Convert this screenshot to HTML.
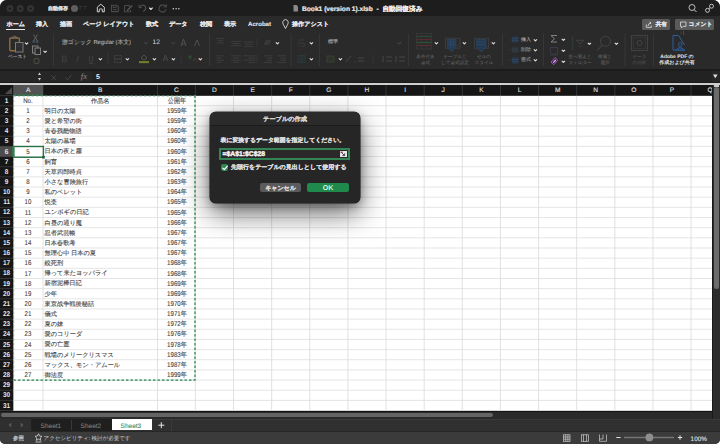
<!DOCTYPE html>
<html><head><meta charset="utf-8">
<style>
html,body{margin:0;padding:0;width:720px;height:444px;overflow:hidden;background:#ffffff;}
body{font-family:"Liberation Sans",sans-serif;position:relative;text-rendering:geometricPrecision;}
.abs{position:absolute;}
#win{position:absolute;left:0;top:0;width:720px;height:444px;border-radius:7px 7px 5px 5px;overflow:hidden;background:#2a2a2a;}
#title{position:absolute;left:0;top:0;width:720px;height:16px;background:#1d1d1d;}
#tabs{position:absolute;left:0;top:16px;width:720px;height:16px;background:#2a2a2a;}
#ribbon{position:absolute;left:0;top:32px;width:720px;height:36px;background:#2a2a2a;}
#fbar{position:absolute;left:0;top:68.6px;width:720px;height:14.4px;background:#262626;border-top:2px solid #1b1b1b;border-bottom:0.8px solid #1b1b1b;box-sizing:border-box;}
.t{position:absolute;white-space:nowrap;line-height:1;}
.tab{position:absolute;top:20px;font-size:6.1px;color:#e6e6e6;font-weight:bold;-webkit-text-stroke:0.1px #e6e6e6;white-space:nowrap;line-height:1;}
.ch{position:absolute;top:85.6px;height:10px;line-height:10px;text-align:center;font-size:6.6px;color:#e2e2e2;-webkit-text-stroke:0.1px #e2e2e2;}
.rh{position:absolute;left:0;width:13.2px;text-align:center;font-size:7px;color:#e6e6e6;font-weight:bold;line-height:10.16px;transform:scaleX(0.92);}
.cell{position:absolute;height:10.16px;line-height:10.16px;font-size:6.2px;color:#444;white-space:nowrap;-webkit-text-stroke:0.12px #4a4a4a;}
.ca{left:13.2px;width:29.8px;text-align:center;font-size:7px;transform:scaleX(0.87);}
.cb{left:44.6px;}
.cb0{left:43px;width:114.5px;text-align:center;}
.cc{left:157.5px;width:37.9px;text-align:center;font-size:7px;transform:scaleX(0.87);}
</style></head><body>
<div id="win">
  <div id="title">
    <svg class="abs" style="left:0;top:0" width="40" height="16" viewBox="0 0 40 16"><g fill="#343434"><circle cx="9.9" cy="8.6" r="3.5"/><circle cx="20.2" cy="8.6" r="3.5"/><circle cx="30.5" cy="8.6" r="3.5"/></g><g fill="#1c1c1c"><circle cx="9.9" cy="8.6" r="1.2"/><circle cx="20.2" cy="8.6" r="1.2"/><circle cx="30.5" cy="8.6" r="1.2"/></g></svg>
    <div class="t" style="left:48px;top:6.6px;font-size:5px;color:#e0e0e0;font-weight:bold;-webkit-text-stroke:0.15px #e0e0e0">自動保存</div>
    <div class="abs" style="left:70.6px;top:4.8px;width:7.4px;height:7.4px;border-radius:50%;background:#5e5e5e;"></div>
    <svg class="abs" style="left:0;top:0" width="720" height="16" viewBox="0 0 720 16">
      <g fill="none">
        <path d="M97.3 11.8 L97.3 7.2 L100.8 4.2 L104.3 7.2 L104.3 11.8 L102.3 11.8 L102.3 9.3 Q100.8 8.2 99.3 9.3 L99.3 11.8 Z" stroke="#e6e6e6" stroke-width="0.9" stroke-linejoin="round"/>
        <path d="M111.5 5.2 L116.8 5.2 L118.3 6.7 L118.3 11.6 L111.5 11.6 Z" stroke="#4a4a4a" stroke-width="1.1" stroke-linejoin="round"/>
        <path d="M113.2 5.5 L113.2 7.5 L116 7.5 L116 5.5 M113 9.6 L116.8 9.6" stroke="#4a4a4a" stroke-width="0.9"/>
        <path d="M124.5 5.5 L129.5 5.5 L129.5 7 M124.5 5.5 L124.5 11.8 L130.5 11.8 L130.5 10" stroke="#4a4a4a" stroke-width="1.1"/>
        <path d="M126.5 10.2 L131.8 5 L132.8 6 L127.6 11.2 Z" fill="#555" stroke="none"/>
        <path d="M139.5 6.8 Q142.5 3.8 145 6.2 Q147 9 143.2 11.6" stroke="#4a4a4a" stroke-width="1.3"/>
        <path d="M138.6 4.8 L139.3 7.6 L142 7.2" stroke="#4a4a4a" stroke-width="1.1"/>
        <path d="M165.8 6.3 Q163.5 3.8 160.5 5.5 Q158.3 7.5 159 10 Q160.5 12.5 163.5 12 Q165.5 11.3 166 9.3" stroke="#4a4a4a" stroke-width="1.3"/>
        <path d="M166.5 4.2 L166.2 7 L163.5 6.8" stroke="#4a4a4a" stroke-width="1.1"/>
        <circle cx="173.3" cy="8.7" r="0.75" fill="#d8d8d8"/>
        <circle cx="176.1" cy="8.7" r="0.75" fill="#d8d8d8"/>
        <circle cx="178.9" cy="8.7" r="0.75" fill="#d8d8d8"/>
        <path d="M293.5 5 L296.5 5 L298 6.5 L298 11.5 L293.5 11.5 Z" fill="#8a8a8a"/>
        <circle cx="692" cy="7.5" r="3" stroke="#cfcfcf" stroke-width="0.9"/>
        <line x1="694.2" y1="9.7" x2="696.5" y2="12" stroke="#cfcfcf" stroke-width="1"/>
        <circle cx="707.5" cy="10.3" r="2" stroke="#cfcfcf" stroke-width="0.9"/>
        <circle cx="711.5" cy="6.2" r="2" stroke="#cfcfcf" stroke-width="0.9"/>
        <line x1="708.8" y1="8.8" x2="710.2" y2="7.6" stroke="#cfcfcf" stroke-width="0.9"/>
      </g>
    </svg>
    <div class="t" style="left:78px;top:6px;font-size:4.5px;color:#4a4a4a">オフ</div>
    <div class="t" style="left:302px;top:6.5px;font-size:6.65px;color:#ececec;font-weight:bold;-webkit-text-stroke:0.2px #ececec">Book1 (version 1).xlsb &nbsp;- &nbsp;自動回復済み</div>
  </div>
  <div id="tabs">
    <div class="tab" style="left:6.5px;top:6px">ホーム</div>
    <div class="abs" style="left:6px;top:13px;width:19px;height:1.3px;background:#e8e8e8"></div>
    <div class="tab" style="left:36px;top:6px">挿入</div>
    <div class="tab" style="left:60px;top:6px">描画</div>
    <div class="tab" style="left:83px;top:6px">ページ レイアウト</div>
    <div class="tab" style="left:146px;top:6px">数式</div>
    <div class="tab" style="left:169px;top:6px">データ</div>
    <div class="tab" style="left:200px;top:6px">校閲</div>
    <div class="tab" style="left:224px;top:6px">表示</div>
    <div class="tab" style="left:248px;top:6px">Acrobat</div>
    <div class="tab" style="left:292px;top:6px">操作アシスト</div>
    <svg class="abs" style="left:280px;top:0" width="12" height="16" viewBox="0 0 12 16"><path d="M5.5 12.5 L3.2 8.2 Q2.5 6.8 3 5.5 Q4 3.5 5.5 3.5 Q7 3.5 8 5.5 Q8.5 6.8 7.8 8.2 Z" fill="none" stroke="#dcdcdc" stroke-width="0.9"/></svg>
    <div class="abs" style="left:642px;top:3.2px;width:28.4px;height:11.2px;border-radius:1.5px;background:#5a5a5a"></div>
    <div class="abs" style="left:675px;top:3.2px;width:39px;height:11.2px;border-radius:1.5px;background:#5a5a5a"></div>
    <svg class="abs" style="left:640px;top:0" width="80" height="16" viewBox="0 0 80 16"><g fill="none" stroke="#e0e0e0" stroke-width="0.8"><path d="M6.3 8.5 L6.3 11.4 L11.3 11.4 L11.3 9.5 M8 10 Q8.3 7.2 10.8 6.8 M9.6 5.8 L11 6.8 L10 8.2"/><path d="M40.5 6 L46 6 L46 10.4 L43 10.4 L41.5 11.9 L41.5 10.4 L40.5 10.4 Z"/></g></svg>
    <div class="tab" style="left:655.5px;top:6.8px;font-size:5.8px">共有</div>
    <div class="tab" style="left:688.6px;top:6.8px;font-size:5.8px">コメント</div>
  </div>
  <div id="ribbon"></div>
  <div id="fbar"></div>
  <div class="abs" style="left:92px;top:70.6px;width:620px;height:11.6px;background:#222222"></div>
  <svg class="abs" style="left:0;top:0" width="720" height="90" viewBox="0 0 720 90">
    <g fill="none" stroke-width="0.9">
      <!-- separators -->
      <g stroke="#3a3a3a" stroke-width="0.8">
        <line x1="53.5" y1="33.5" x2="53.5" y2="66"/>
        <line x1="209.5" y1="33.5" x2="209.5" y2="66"/>
        <line x1="291" y1="33.5" x2="291" y2="66"/>
        <line x1="319.5" y1="33.5" x2="319.5" y2="66"/>
        <line x1="408.5" y1="33.5" x2="408.5" y2="66"/>
        <line x1="502.5" y1="33.5" x2="502.5" y2="66"/>
        <line x1="543.5" y1="33.5" x2="543.5" y2="66"/>
        <line x1="625" y1="33.5" x2="625" y2="66"/>
        <line x1="653.5" y1="33.5" x2="653.5" y2="66"/>
        <line x1="108" y1="52.5" x2="108" y2="64"/>
        <line x1="181" y1="55" x2="181" y2="63"/>
        <line x1="257" y1="39" x2="257" y2="47"/>
        <line x1="257" y1="55" x2="257" y2="63"/>
        <line x1="373" y1="55" x2="373" y2="63"/>
      </g>
      <!-- paste -->
      <rect x="9.8" y="38" width="9.6" height="12.8" rx="1" stroke="#8e6e40" stroke-width="1.4"/>
      <path d="M12.5 38.5 L12.5 37 Q14.6 35.2 16.7 37 L16.7 38.5" stroke="#6e6a60" stroke-width="1"/>
      <rect x="15.5" y="42.5" width="7.5" height="9.5" fill="#2e2e2e" stroke="#7a7a7a" stroke-width="1"/><path d="M17 44.5 L21.5 44.5 M17 46.5 L21.5 46.5" stroke="#3a3a3a" stroke-width="0.6"/>
      <!-- scissors -->
      <path d="M33.5 34.5 L37.5 41 M37.5 34.5 L33.5 41" stroke="#6e6e6e" stroke-width="0.8"/>
      <circle cx="33.8" cy="41.6" r="0.9" stroke="#5a6a7a" stroke-width="0.7"/>
      <circle cx="37.2" cy="41.6" r="0.9" stroke="#5a6a7a" stroke-width="0.7"/>
      <!-- copy -->
      <rect x="32.5" y="46" width="5.5" height="7" stroke="#8a8a8a"/>
      <rect x="35" y="48" width="5.5" height="6.5" fill="#2a2a2a" stroke="#8a8a8a"/>
      <!-- format painter -->
      <circle cx="36.5" cy="61" r="2.6" stroke="#48483e" stroke-width="1.1"/>
      <!-- chevrons (white-ish) -->
      <g stroke="#dedede" stroke-width="1.15" stroke-linejoin="round">
        <path d="M25 42.6 L26.6 44.2 L28.2 42.6"/>
        <path d="M43.5 50.8 L45.1 52.4 L46.7 50.8"/>
        <path d="M98.8 58.3 L100.4 59.9 L102 58.3"/>
        <path d="M125.8 58.3 L127.4 59.9 L129 58.3"/>
        <path d="M152.8 58.3 L154.4 59.9 L156 58.3"/>
        <path d="M171.8 58.3 L173.4 59.9 L175 58.3"/>
        <path d="M198.8 58.3 L200.4 59.9 L202 58.3"/>
        <path d="M275.8 42.3 L277.4 43.9 L279 42.3"/>
        <path d="M309.8 42.3 L311.4 43.9 L313 42.3"/>
        <path d="M309.8 58.3 L311.4 59.9 L313 58.3"/>
        <path d="M338.8 58.3 L340.4 59.9 L342 58.3"/>
        <path d="M434.8 42.3 L436.4 43.9 L438 42.3"/>
        <path d="M462.8 42.3 L464.4 43.9 L466 42.3"/>
        <path d="M491.8 42.3 L493.4 43.9 L495 42.3"/>
        <path d="M533.8 39.3 L535.4 40.9 L537 39.3"/>
        <path d="M533.8 49.3 L535.4 50.9 L537 49.3"/>
        <path d="M533.8 59.3 L535.4 60.9 L537 59.3"/>
        <path d="M561.8 38.8 L563.4 40.4 L565 38.8"/>
        <path d="M561.8 49.8 L563.4 51.4 L565 49.8"/>
        <path d="M561.8 60.8 L563.4 62.4 L565 60.8"/>
        <path d="M587.8 42.8 L589.4 44.4 L591 42.8"/>
        <path d="M614.8 42.8 L616.4 44.4 L618 42.8"/>
        <path d="M149.2 7.6 L150.9 9.5 L152.6 7.6"/>
      </g>
      <!-- dim chevrons -->
      <g stroke="#5a5a5a" stroke-width="0.8">
        <path d="M144.3 42.3 L145.9 43.9 L147.5 42.3"/>
        <path d="M171.8 42.3 L173.4 43.9 L175 42.3"/>
        <path d="M397.8 42.3 L399.4 43.9 L401 42.3"/>
      </g>
      <!-- font grow/shrink -->
      <path d="M181 46 L183.5 39 L186 46 M182 44 L185 44" stroke="#555"/>
      <path d="M194.5 46 L197 40 L199.5 46" stroke="#555"/>
      <!-- B I U -->
      <path d="M62.5 56 L62.5 62 L65 62 Q66.5 62 66.5 60.5 Q66.5 59 65 59 L62.5 59 M62.5 56 L64.8 56 Q66 56 66 57.5 Q66 59 64.8 59" stroke="#3e3e3e" stroke-width="1.2"/>
      <path d="M78.5 56 L76.8 62" stroke="#3e3e3e" stroke-width="1.1"/>
      <path d="M89.5 56 L89.5 60.5 Q89.5 62 91 62 Q92.5 62 92.5 60.5 L92.5 56 M89 63.5 L93 63.5" stroke="#3e3e3e" stroke-width="1.1"/>
      <!-- borders -->
      <rect x="114.5" y="55.5" width="7" height="7" stroke="#4a4a4a" stroke-dasharray="1 0.8"/>
      <line x1="114.5" y1="59" x2="121.5" y2="59" stroke="#4a4a4a"/>
      <!-- fill color -->
      <path d="M141 58 L144 55 L147 58 L144 60 Z" stroke="#555"/>
      <rect x="139" y="61" width="10" height="2.2" fill="#6e7a2a" stroke="none"/>
      <!-- font color -->
      <path d="M163 61 L165.5 55 L168 61 M164 59 L167 59" stroke="#4a4a4a"/>
      <!-- misc japanese icon -->
      <path d="M188 57 L192 57 M190 55 L190 59 M193 61 L196 58" stroke="#2e5a3a"/>
      <path d="M196 62 L199 59" stroke="#6a2a2a"/>
      <!-- alignment -->
      <g stroke="#4a4a4a" stroke-width="0.6">
        <path d="M216.5 38.5 L224 38.5 M217.5 40.7 L223 40.7 M216.5 42.9 L224 42.9"/>
        <path d="M231 41.3 L241 41.3 M232.5 43.5 L239.5 43.5 M231 45.7 L241 45.7"/>
        <path d="M243.5 42 L253.5 42 M245 44.2 L252 44.2 M243.5 46.4 L253.5 46.4"/>
        <path d="M216.5 55.8 L224 55.8 M216.5 58 L221.5 58 M216.5 60.2 L224 60.2 M216.5 62.4 L221.5 62.4"/>
        <path d="M231 55.8 L241 55.8 M233 58 L239 58 M231 60.2 L241 60.2 M233 62.4 L239 62.4"/>
        <path d="M243.5 55.8 L255.5 55.8 M248.5 58 L255.5 58 M243.5 60.2 L255.5 60.2 M248.5 62.4 L255.5 62.4"/>
        <path d="M264 55.8 L272 55.8 M267 58 L272 58 M267 60.2 L272 60.2 M264 62.4 L272 62.4"/>
        <path d="M277.5 55.8 L286 55.8 M280.5 58 L286 58 M280.5 60.2 L286 60.2 M277.5 62.4 L286 62.4"/>
      </g>
      <path d="M264.5 44.5 L270.5 40.5" stroke="#3e3e3e" stroke-width="1.6"/>
      <circle cx="267.3" cy="42.4" r="2.6" fill="#383838"/>
      <!-- wrap / merge -->
      <path d="M298 40 L304 40 M298 43 L303 43 Q305 43 305 44.5 Q305 46 303 46 L301 46 M298 46 L299 46" stroke="#3c3c3c" stroke-width="0.9"/>
      <rect x="298" y="55.5" width="7" height="7" stroke="#2a3a3c" stroke-width="0.9" fill="#26302f"/>
      <line x1="301.5" y1="55.5" x2="301.5" y2="62.5" stroke="#2a3a3c"/>
      <!-- number -->
      <rect x="327" y="56" width="7" height="6" stroke="#3a4630" fill="#2e322a"/>
      <path d="M346 62 L351 56 M346.5 57 L346.5 57.2 M350.5 61 L350.5 61.2" stroke="#4a4a4a"/>
      <path d="M355 61 L355 62.5 M358 58 L364 58 M358 61 L364 61" stroke="#4a4a4a"/>
      <path d="M383 56 L383 62 M386 57 L392 57 M386 61 L392 61" stroke="#4a4a4a"/>
      <path d="M396 56 L396 62 M399 57 L405 57 M399 61 L405 61" stroke="#4a4a4a"/>
      <!-- styles: conditional formatting -->
      <g stroke-width="1.1">
        <rect x="416.5" y="33.5" width="15" height="15.5" stroke="#3a3a3a" fill="#2a2a2a" stroke-width="0.8"/>
        <line x1="417" y1="36.5" x2="431" y2="36.5" stroke="#2a4a3a"/>
        <line x1="417" y1="39.5" x2="431" y2="39.5" stroke="#5e2a34"/>
        <line x1="417" y1="42.5" x2="431" y2="42.5" stroke="#2a5a3a"/>
        <line x1="417" y1="45.5" x2="431" y2="45.5" stroke="#5e2a34"/>
        <path d="M421.5 34 L421.5 48.5 M426.5 34 L426.5 48.5" stroke="#3a3a3a" stroke-width="0.5"/>
      </g>
      <!-- table format -->
      <rect x="445.5" y="38.3" width="14.5" height="10" stroke="#3e3e3e" stroke-width="0.9"/>
      <path d="M447.5 39.5 L456 39.5 L456 47 L451.8 52 L447.5 47 Z" fill="#243a52" stroke="#2e4a66" stroke-width="0.6"/>
      <path d="M448 42 L455.5 42 M448 44.5 L455.5 44.5 M450.5 40 L450.5 48 M453 40 L453 48" stroke="#34506c" stroke-width="0.5"/>
      <line x1="456.5" y1="48" x2="460" y2="42" stroke="#4a3a2a" stroke-width="0.8"/>
      <!-- cell style -->
      <rect x="474.5" y="38.3" width="14" height="10" stroke="#3e3e3e" stroke-width="0.9"/>
      <path d="M476.5 39.5 L486 39.5 L486 47 L481.2 52 L476.5 47 Z" fill="#243a52" stroke="#2e4a66" stroke-width="0.6"/>
      <path d="M477 42 L485.5 42 M477 44.5 L485.5 44.5" stroke="#34506c" stroke-width="0.5"/>
      <line x1="486" y1="49" x2="491.5" y2="41" stroke="#3a3a3a" stroke-width="0.8"/>
      <!-- cells insert/delete/format -->
      <rect x="512" y="36.5" width="6.5" height="6" fill="#243a50"/>
      <rect x="512" y="47" width="6.5" height="6" fill="#2e3236"/>
      <rect x="512" y="57.5" width="6.5" height="6" fill="#243a50"/>
      <g stroke="#3a4a5a" stroke-width="0.6">
        <path d="M512 38.5 L518.5 38.5 M512 40.5 L518.5 40.5 M512 49 L518.5 49 M512 51 L518.5 51 M512 59.5 L518.5 59.5 M512 61.5 L518.5 61.5"/>
      </g>
      <path d="M509.5 40 L511 40 M509.5 50 L511 50 M509.5 60 L511 60" stroke="#444" stroke-width="0.8"/>
      <!-- sum -->
      <path d="M557 35.5 L551 35.5 L554.5 38.8 L551 42 L557 42" stroke="#8a8a8a" stroke-width="0.9"/>
      <rect x="550.5" y="47.5" width="7" height="6.5" stroke="#40384e" stroke-width="0.9"/><line x1="550.5" y1="55" x2="557.5" y2="55" stroke="#2e4a36" stroke-width="0.8"/>
      <path d="M551 62 L555 57.5 L557.8 60.2 L553.8 64.7 Z" stroke="#a04cc0" fill="#3a2440" stroke-width="1"/><path d="M552.8 62.2 L555.3 59.5 L556.2 60.4 L553.7 63.1 Z" fill="#d8c8e0"/>
      <!-- funnel -->
      <path d="M576.5 40.3 L584 40.3 L580.2 44 Z" stroke="#444" stroke-width="0.9"/>
      <path d="M578 46.5 L582.5 46.5" stroke="#3a3a3a" stroke-width="0.8"/>
      <path d="M572.5 36.5 L572.5 50" stroke="#2e3a33" stroke-width="1.6"/>
      <!-- magnifier -->
      <circle cx="605.5" cy="41.3" r="5" stroke="#444" stroke-width="1"/>
      <line x1="602" y1="45" x2="597.5" y2="50.5" stroke="#444" stroke-width="1.1"/>
      <!-- analyze data -->
      <rect x="631.5" y="35.5" width="16" height="15" stroke="#444" stroke-width="0.9"/>
      <rect x="633.5" y="37.5" width="12" height="11" stroke="#3a3a3a" stroke-width="0.7"/>
      <circle cx="639.5" cy="43" r="2.5" stroke="#4a4a4a" stroke-width="0.8"/>
      <!-- adobe pdf -->
      <path d="M673 35.5 L678.5 35.5 L684.5 45 M673 35.5 L673 50 L676 50" stroke="#2f5f9c" stroke-width="1"/>
      <circle cx="680.2" cy="44.3" r="1.8" stroke="#2f5f9c" stroke-width="0.9"/>
      <path d="M675.5 50.3 L680.2 46.8 L685 50.3 Z" stroke="#2f5f9c" fill="#22406a" stroke-width="0.9"/>
      <line x1="683.5" y1="31" x2="683.8" y2="35" stroke="#7a4a2a" stroke-width="0.8"/>
      <line x1="681" y1="31.5" x2="681.2" y2="34.5" stroke="#2a5a3a" stroke-width="0.7"/>
    </g>
    <!-- formula bar icons -->
    <g fill="none">
      <path d="M38 75 L39.5 72.5 L41 75 Z" fill="#d0d0d0"/>
      <path d="M38 78 L39.5 80.5 L41 78 Z" fill="#d0d0d0"/>
      <path d="M51.5 75.5 L56 80 M56 75.5 L51.5 80" stroke="#4e4e4e" stroke-width="0.8"/>
      <path d="M65.5 77.5 L67.5 79.8 L71.5 75.2" stroke="#4e4e4e" stroke-width="0.8"/>
      <path d="M713 74.6 L717.6 74.6 L715.3 78.2 Z" fill="#e0e0e0"/>
    </g>
  </svg>
  <div class="t" style="left:8px;top:55px;font-size:4.7px;color:#a8a8bc;-webkit-text-stroke:0.1px #a8a8bc">ペースト</div>
  <div class="t" style="left:62px;top:41px;font-size:5.85px;color:#b0b0b0;-webkit-text-stroke:0.1px #b0b0b0">游ゴシック Regular (本文)</div>
  <div class="t" style="left:152.5px;top:39.5px;font-size:6.6px;color:#dcdcdc">12</div>
  <div class="t" style="left:328px;top:40.3px;font-size:5px;color:#9a9a9a;font-weight:bold">標準</div>
  <div class="t" style="left:416px;top:54px;font-size:4.6px;color:#6a6a6a;line-height:6px;text-align:center;width:19px">条件付き<br>書式</div>
  <div class="t" style="left:440px;top:54px;font-size:4.6px;color:#6a6a6a;line-height:6px;text-align:center;width:30px">テーブルと<br>して書式設定</div>
  <div class="t" style="left:474px;top:54px;font-size:4.6px;color:#6a6a6a;line-height:6px;text-align:center;width:20px">セルの<br>スタイル</div>
  <div class="t" style="left:521px;top:37.5px;font-size:5px;color:#9a9a9a;font-weight:bold">挿入</div>
  <div class="t" style="left:521px;top:47.5px;font-size:5px;color:#7a7a7a;font-weight:bold">削除</div>
  <div class="t" style="left:521px;top:57.5px;font-size:5px;color:#7a7a7a;font-weight:bold">書式</div>
  <div class="t" style="left:567px;top:54px;font-size:4.6px;color:#6a6a6a;line-height:6px;text-align:center;width:26px">並べ替えと<br>フィルター</div>
  <div class="t" style="left:595px;top:54px;font-size:4.6px;color:#6a6a6a;line-height:6px;text-align:center;width:20px">検索と<br>選択</div>
  <div class="t" style="left:629px;top:54px;font-size:4.6px;color:#5a5a5a;line-height:6px;text-align:center;width:21px">データ<br>の分析</div>
  <div class="t" style="left:656px;top:54px;font-size:5px;color:#e6e6e6;line-height:6px;text-align:center;width:42px;font-weight:bold">Adobe PDF の<br>作成および共有</div>
  <div class="t" style="left:80.8px;top:72px;font-size:8.6px;color:#8e8e8e;font-family:'Liberation Serif',serif;font-style:italic">fx</div>
  <div class="t" style="left:96px;top:74px;font-size:7px;color:#f0f0f0;font-weight:bold">5</div>
<svg class="abs" style="left:0;top:0" width="720" height="444" viewBox="0 0 720 444">
<rect x="13.2" y="95.6" width="698.8" height="315" fill="#ffffff"/>
<rect x="0" y="85" width="712.0" height="10.6" fill="#161616"/>
<rect x="0" y="95.6" width="13.2" height="315" fill="#161616"/>
<line x1="13.2" y1="105.76" x2="712.0" y2="105.76" stroke="#e0e0e0" stroke-width="0.85"/>
<line x1="13.2" y1="115.92" x2="712.0" y2="115.92" stroke="#e0e0e0" stroke-width="0.85"/>
<line x1="13.2" y1="126.08" x2="712.0" y2="126.08" stroke="#e0e0e0" stroke-width="0.85"/>
<line x1="13.2" y1="136.24" x2="712.0" y2="136.24" stroke="#e0e0e0" stroke-width="0.85"/>
<line x1="13.2" y1="146.4" x2="712.0" y2="146.4" stroke="#e0e0e0" stroke-width="0.85"/>
<line x1="13.2" y1="156.56" x2="712.0" y2="156.56" stroke="#e0e0e0" stroke-width="0.85"/>
<line x1="13.2" y1="166.72" x2="712.0" y2="166.72" stroke="#e0e0e0" stroke-width="0.85"/>
<line x1="13.2" y1="176.88" x2="712.0" y2="176.88" stroke="#e0e0e0" stroke-width="0.85"/>
<line x1="13.2" y1="187.04" x2="712.0" y2="187.04" stroke="#e0e0e0" stroke-width="0.85"/>
<line x1="13.2" y1="197.2" x2="712.0" y2="197.2" stroke="#e0e0e0" stroke-width="0.85"/>
<line x1="13.2" y1="207.36" x2="712.0" y2="207.36" stroke="#e0e0e0" stroke-width="0.85"/>
<line x1="13.2" y1="217.52" x2="712.0" y2="217.52" stroke="#e0e0e0" stroke-width="0.85"/>
<line x1="13.2" y1="227.68" x2="712.0" y2="227.68" stroke="#e0e0e0" stroke-width="0.85"/>
<line x1="13.2" y1="237.84" x2="712.0" y2="237.84" stroke="#e0e0e0" stroke-width="0.85"/>
<line x1="13.2" y1="248" x2="712.0" y2="248" stroke="#e0e0e0" stroke-width="0.85"/>
<line x1="13.2" y1="258.16" x2="712.0" y2="258.16" stroke="#e0e0e0" stroke-width="0.85"/>
<line x1="13.2" y1="268.32" x2="712.0" y2="268.32" stroke="#e0e0e0" stroke-width="0.85"/>
<line x1="13.2" y1="278.48" x2="712.0" y2="278.48" stroke="#e0e0e0" stroke-width="0.85"/>
<line x1="13.2" y1="288.64" x2="712.0" y2="288.64" stroke="#e0e0e0" stroke-width="0.85"/>
<line x1="13.2" y1="298.8" x2="712.0" y2="298.8" stroke="#e0e0e0" stroke-width="0.85"/>
<line x1="13.2" y1="308.96" x2="712.0" y2="308.96" stroke="#e0e0e0" stroke-width="0.85"/>
<line x1="13.2" y1="319.12" x2="712.0" y2="319.12" stroke="#e0e0e0" stroke-width="0.85"/>
<line x1="13.2" y1="329.28" x2="712.0" y2="329.28" stroke="#e0e0e0" stroke-width="0.85"/>
<line x1="13.2" y1="339.44" x2="712.0" y2="339.44" stroke="#e0e0e0" stroke-width="0.85"/>
<line x1="13.2" y1="349.6" x2="712.0" y2="349.6" stroke="#e0e0e0" stroke-width="0.85"/>
<line x1="13.2" y1="359.76" x2="712.0" y2="359.76" stroke="#e0e0e0" stroke-width="0.85"/>
<line x1="13.2" y1="369.92" x2="712.0" y2="369.92" stroke="#e0e0e0" stroke-width="0.85"/>
<line x1="13.2" y1="380.08" x2="712.0" y2="380.08" stroke="#e0e0e0" stroke-width="0.85"/>
<line x1="13.2" y1="390.24" x2="712.0" y2="390.24" stroke="#e0e0e0" stroke-width="0.85"/>
<line x1="13.2" y1="400.4" x2="712.0" y2="400.4" stroke="#e0e0e0" stroke-width="0.85"/>
<line x1="13.2" y1="410.56" x2="712.0" y2="410.56" stroke="#e0e0e0" stroke-width="0.85"/>
<line x1="43" y1="95.6" x2="43" y2="410.6" stroke="#dcdcdc" stroke-width="0.85"/>
<line x1="157.5" y1="95.6" x2="157.5" y2="410.6" stroke="#dcdcdc" stroke-width="0.85"/>
<line x1="195.4" y1="95.6" x2="195.4" y2="410.6" stroke="#dcdcdc" stroke-width="0.85"/>
<line x1="233.53" y1="95.6" x2="233.53" y2="410.6" stroke="#dcdcdc" stroke-width="0.85"/>
<line x1="271.66" y1="95.6" x2="271.66" y2="410.6" stroke="#dcdcdc" stroke-width="0.85"/>
<line x1="309.79" y1="95.6" x2="309.79" y2="410.6" stroke="#dcdcdc" stroke-width="0.85"/>
<line x1="347.92" y1="95.6" x2="347.92" y2="410.6" stroke="#dcdcdc" stroke-width="0.85"/>
<line x1="386.05" y1="95.6" x2="386.05" y2="410.6" stroke="#dcdcdc" stroke-width="0.85"/>
<line x1="424.18" y1="95.6" x2="424.18" y2="410.6" stroke="#dcdcdc" stroke-width="0.85"/>
<line x1="462.31" y1="95.6" x2="462.31" y2="410.6" stroke="#dcdcdc" stroke-width="0.85"/>
<line x1="500.44" y1="95.6" x2="500.44" y2="410.6" stroke="#dcdcdc" stroke-width="0.85"/>
<line x1="538.57" y1="95.6" x2="538.57" y2="410.6" stroke="#dcdcdc" stroke-width="0.85"/>
<line x1="576.7" y1="95.6" x2="576.7" y2="410.6" stroke="#dcdcdc" stroke-width="0.85"/>
<line x1="614.83" y1="95.6" x2="614.83" y2="410.6" stroke="#dcdcdc" stroke-width="0.85"/>
<line x1="652.96" y1="95.6" x2="652.96" y2="410.6" stroke="#dcdcdc" stroke-width="0.85"/>
<line x1="691.09" y1="95.6" x2="691.09" y2="410.6" stroke="#dcdcdc" stroke-width="0.85"/>
<line x1="43" y1="85" x2="43" y2="95.6" stroke="#3c3c3c" stroke-width="0.8"/>
<line x1="157.5" y1="85" x2="157.5" y2="95.6" stroke="#3c3c3c" stroke-width="0.8"/>
<line x1="195.4" y1="85" x2="195.4" y2="95.6" stroke="#3c3c3c" stroke-width="0.8"/>
<line x1="233.53" y1="85" x2="233.53" y2="95.6" stroke="#3c3c3c" stroke-width="0.8"/>
<line x1="271.66" y1="85" x2="271.66" y2="95.6" stroke="#3c3c3c" stroke-width="0.8"/>
<line x1="309.79" y1="85" x2="309.79" y2="95.6" stroke="#3c3c3c" stroke-width="0.8"/>
<line x1="347.92" y1="85" x2="347.92" y2="95.6" stroke="#3c3c3c" stroke-width="0.8"/>
<line x1="386.05" y1="85" x2="386.05" y2="95.6" stroke="#3c3c3c" stroke-width="0.8"/>
<line x1="424.18" y1="85" x2="424.18" y2="95.6" stroke="#3c3c3c" stroke-width="0.8"/>
<line x1="462.31" y1="85" x2="462.31" y2="95.6" stroke="#3c3c3c" stroke-width="0.8"/>
<line x1="500.44" y1="85" x2="500.44" y2="95.6" stroke="#3c3c3c" stroke-width="0.8"/>
<line x1="538.57" y1="85" x2="538.57" y2="95.6" stroke="#3c3c3c" stroke-width="0.8"/>
<line x1="576.7" y1="85" x2="576.7" y2="95.6" stroke="#3c3c3c" stroke-width="0.8"/>
<line x1="614.83" y1="85" x2="614.83" y2="95.6" stroke="#3c3c3c" stroke-width="0.8"/>
<line x1="652.96" y1="85" x2="652.96" y2="95.6" stroke="#3c3c3c" stroke-width="0.8"/>
<line x1="691.09" y1="85" x2="691.09" y2="95.6" stroke="#3c3c3c" stroke-width="0.8"/>
<line x1="0" y1="95.6" x2="13.2" y2="95.6" stroke="#3c3c3c" stroke-width="0.8"/>
<line x1="0" y1="105.76" x2="13.2" y2="105.76" stroke="#3c3c3c" stroke-width="0.8"/>
<line x1="0" y1="115.92" x2="13.2" y2="115.92" stroke="#3c3c3c" stroke-width="0.8"/>
<line x1="0" y1="126.08" x2="13.2" y2="126.08" stroke="#3c3c3c" stroke-width="0.8"/>
<line x1="0" y1="136.24" x2="13.2" y2="136.24" stroke="#3c3c3c" stroke-width="0.8"/>
<line x1="0" y1="146.4" x2="13.2" y2="146.4" stroke="#3c3c3c" stroke-width="0.8"/>
<line x1="0" y1="156.56" x2="13.2" y2="156.56" stroke="#3c3c3c" stroke-width="0.8"/>
<line x1="0" y1="166.72" x2="13.2" y2="166.72" stroke="#3c3c3c" stroke-width="0.8"/>
<line x1="0" y1="176.88" x2="13.2" y2="176.88" stroke="#3c3c3c" stroke-width="0.8"/>
<line x1="0" y1="187.04" x2="13.2" y2="187.04" stroke="#3c3c3c" stroke-width="0.8"/>
<line x1="0" y1="197.2" x2="13.2" y2="197.2" stroke="#3c3c3c" stroke-width="0.8"/>
<line x1="0" y1="207.36" x2="13.2" y2="207.36" stroke="#3c3c3c" stroke-width="0.8"/>
<line x1="0" y1="217.52" x2="13.2" y2="217.52" stroke="#3c3c3c" stroke-width="0.8"/>
<line x1="0" y1="227.68" x2="13.2" y2="227.68" stroke="#3c3c3c" stroke-width="0.8"/>
<line x1="0" y1="237.84" x2="13.2" y2="237.84" stroke="#3c3c3c" stroke-width="0.8"/>
<line x1="0" y1="248" x2="13.2" y2="248" stroke="#3c3c3c" stroke-width="0.8"/>
<line x1="0" y1="258.16" x2="13.2" y2="258.16" stroke="#3c3c3c" stroke-width="0.8"/>
<line x1="0" y1="268.32" x2="13.2" y2="268.32" stroke="#3c3c3c" stroke-width="0.8"/>
<line x1="0" y1="278.48" x2="13.2" y2="278.48" stroke="#3c3c3c" stroke-width="0.8"/>
<line x1="0" y1="288.64" x2="13.2" y2="288.64" stroke="#3c3c3c" stroke-width="0.8"/>
<line x1="0" y1="298.8" x2="13.2" y2="298.8" stroke="#3c3c3c" stroke-width="0.8"/>
<line x1="0" y1="308.96" x2="13.2" y2="308.96" stroke="#3c3c3c" stroke-width="0.8"/>
<line x1="0" y1="319.12" x2="13.2" y2="319.12" stroke="#3c3c3c" stroke-width="0.8"/>
<line x1="0" y1="329.28" x2="13.2" y2="329.28" stroke="#3c3c3c" stroke-width="0.8"/>
<line x1="0" y1="339.44" x2="13.2" y2="339.44" stroke="#3c3c3c" stroke-width="0.8"/>
<line x1="0" y1="349.6" x2="13.2" y2="349.6" stroke="#3c3c3c" stroke-width="0.8"/>
<line x1="0" y1="359.76" x2="13.2" y2="359.76" stroke="#3c3c3c" stroke-width="0.8"/>
<line x1="0" y1="369.92" x2="13.2" y2="369.92" stroke="#3c3c3c" stroke-width="0.8"/>
<line x1="0" y1="380.08" x2="13.2" y2="380.08" stroke="#3c3c3c" stroke-width="0.8"/>
<line x1="0" y1="390.24" x2="13.2" y2="390.24" stroke="#3c3c3c" stroke-width="0.8"/>
<line x1="0" y1="400.4" x2="13.2" y2="400.4" stroke="#3c3c3c" stroke-width="0.8"/>
<line x1="0" y1="410.56" x2="13.2" y2="410.56" stroke="#3c3c3c" stroke-width="0.8"/>
<path d="M12 87.2 L12 94 L5 94 Z" fill="#4a4a4a"/>
<rect x="13.2" y="85" width="29.8" height="10.6" fill="#525252"/>
<line x1="13.2" y1="95" x2="43" y2="95" stroke="#2f7a4b" stroke-width="1.2"/>
<rect x="0" y="146.4" width="13.2" height="10.16" fill="#4d4d4d"/>
<line x1="12.6" y1="146.4" x2="12.6" y2="156.56" stroke="#2f7a4b" stroke-width="1.2"/>
<rect x="0" y="83" width="720" height="2" fill="#cfcfcf"/>
<line x1="195" y1="95.6" x2="195" y2="380.08" stroke="#cdeedb" stroke-width="1.2"/>
<line x1="13.5" y1="380.08" x2="195.4" y2="380.08" stroke="#cdeedb" stroke-width="1.2"/>
<line x1="13.5" y1="95.9" x2="195.4" y2="95.9" stroke="#4f9a70" stroke-width="0.9" stroke-dasharray="2.4 2.1"/>
<line x1="13.5" y1="380.08" x2="195.4" y2="380.08" stroke="#357a55" stroke-width="1.2" stroke-dasharray="2.4 2.1"/>
<line x1="13.7" y1="95.6" x2="13.7" y2="380.08" stroke="#6aa886" stroke-width="0.8" stroke-dasharray="2.4 2.1"/>
<line x1="195" y1="95.6" x2="195" y2="380.08" stroke="#357a55" stroke-width="1.2" stroke-dasharray="2.4 2.1"/>
<rect x="13.9" y="146.5" width="29.5" height="10.76" fill="none" stroke="#2a7148" stroke-width="1.4"/>
<rect x="42.2" y="155.96" width="2.6" height="2.6" fill="#1f5c38"/>
</svg>
<div class="ch" style="left:13.2px;width:29.8px">A</div>
<div class="ch" style="left:43px;width:114.5px">B</div>
<div class="ch" style="left:157.5px;width:37.9px">C</div>
<div class="ch" style="left:195.4px;width:38.13px">D</div>
<div class="ch" style="left:233.53px;width:38.13px">E</div>
<div class="ch" style="left:271.66px;width:38.13px">F</div>
<div class="ch" style="left:309.79px;width:38.13px">G</div>
<div class="ch" style="left:347.92px;width:38.13px">H</div>
<div class="ch" style="left:386.05px;width:38.13px">I</div>
<div class="ch" style="left:424.18px;width:38.13px">J</div>
<div class="ch" style="left:462.31px;width:38.13px">K</div>
<div class="ch" style="left:500.44px;width:38.13px">L</div>
<div class="ch" style="left:538.57px;width:38.13px">M</div>
<div class="ch" style="left:576.7px;width:38.13px">N</div>
<div class="ch" style="left:614.83px;width:38.13px">O</div>
<div class="ch" style="left:652.96px;width:38.13px">P</div>
<div class="ch" style="left:691.09px;width:38.13px">Q</div>
<div class="rh" style="top:96.7px;height:10.16px">1</div>
<div class="rh" style="top:106.86px;height:10.16px">2</div>
<div class="rh" style="top:117.02px;height:10.16px">3</div>
<div class="rh" style="top:127.18px;height:10.16px">4</div>
<div class="rh" style="top:137.34px;height:10.16px">5</div>
<div class="rh" style="top:147.5px;height:10.16px">6</div>
<div class="rh" style="top:157.66px;height:10.16px">7</div>
<div class="rh" style="top:167.82px;height:10.16px">8</div>
<div class="rh" style="top:177.98px;height:10.16px">9</div>
<div class="rh" style="top:188.14px;height:10.16px">10</div>
<div class="rh" style="top:198.3px;height:10.16px">11</div>
<div class="rh" style="top:208.46px;height:10.16px">12</div>
<div class="rh" style="top:218.62px;height:10.16px">13</div>
<div class="rh" style="top:228.78px;height:10.16px">14</div>
<div class="rh" style="top:238.94px;height:10.16px">15</div>
<div class="rh" style="top:249.1px;height:10.16px">16</div>
<div class="rh" style="top:259.26px;height:10.16px">17</div>
<div class="rh" style="top:269.42px;height:10.16px">18</div>
<div class="rh" style="top:279.58px;height:10.16px">19</div>
<div class="rh" style="top:289.74px;height:10.16px">20</div>
<div class="rh" style="top:299.9px;height:10.16px">21</div>
<div class="rh" style="top:310.06px;height:10.16px">22</div>
<div class="rh" style="top:320.22px;height:10.16px">23</div>
<div class="rh" style="top:330.38px;height:10.16px">24</div>
<div class="rh" style="top:340.54px;height:10.16px">25</div>
<div class="rh" style="top:350.7px;height:10.16px">26</div>
<div class="rh" style="top:360.86px;height:10.16px">27</div>
<div class="rh" style="top:371.02px;height:10.16px">28</div>
<div class="rh" style="top:381.18px;height:10.16px">29</div>
<div class="rh" style="top:391.34px;height:10.16px">30</div>
<div class="rh" style="top:401.5px;height:10.16px">31</div>
<div class="cell ca" style="top:96.8px">No.</div>
<div class="cell cb0" style="top:96.6px">作品名</div>
<div class="cell cc" style="top:96.8px">公開年</div>
<div class="cell ca" style="top:106.96px">1</div>
<div class="cell cb" style="top:106.76px">明日の太陽</div>
<div class="cell cc" style="top:106.96px">1959年</div>
<div class="cell ca" style="top:117.12px">2</div>
<div class="cell cb" style="top:116.92px">愛と希望の街</div>
<div class="cell cc" style="top:117.12px">1959年</div>
<div class="cell ca" style="top:127.28px">3</div>
<div class="cell cb" style="top:127.08px">青春残酷物語</div>
<div class="cell cc" style="top:127.28px">1960年</div>
<div class="cell ca" style="top:137.44px">4</div>
<div class="cell cb" style="top:137.24px">太陽の墓場</div>
<div class="cell cc" style="top:137.44px">1960年</div>
<div class="cell ca" style="top:147.6px">5</div>
<div class="cell cb" style="top:147.4px">日本の夜と霧</div>
<div class="cell cc" style="top:147.6px">1960年</div>
<div class="cell ca" style="top:157.76px">6</div>
<div class="cell cb" style="top:157.56px">飼育</div>
<div class="cell cc" style="top:157.76px">1961年</div>
<div class="cell ca" style="top:167.92px">7</div>
<div class="cell cb" style="top:167.72px">天草四郎時貞</div>
<div class="cell cc" style="top:167.92px">1962年</div>
<div class="cell ca" style="top:178.08px">8</div>
<div class="cell cb" style="top:177.88px">小さな冒険旅行</div>
<div class="cell cc" style="top:178.08px">1963年</div>
<div class="cell ca" style="top:188.24px">9</div>
<div class="cell cb" style="top:188.04px">私のベレット</div>
<div class="cell cc" style="top:188.24px">1964年</div>
<div class="cell ca" style="top:198.4px">10</div>
<div class="cell cb" style="top:198.2px">悦楽</div>
<div class="cell cc" style="top:198.4px">1965年</div>
<div class="cell ca" style="top:208.56px">11</div>
<div class="cell cb" style="top:208.36px">ユンボギの日記</div>
<div class="cell cc" style="top:208.56px">1965年</div>
<div class="cell ca" style="top:218.72px">12</div>
<div class="cell cb" style="top:218.52px">白昼の通り魔</div>
<div class="cell cc" style="top:218.72px">1966年</div>
<div class="cell ca" style="top:228.88px">13</div>
<div class="cell cb" style="top:228.68px">忍者武芸帳</div>
<div class="cell cc" style="top:228.88px">1967年</div>
<div class="cell ca" style="top:239.04px">14</div>
<div class="cell cb" style="top:238.84px">日本春歌考</div>
<div class="cell cc" style="top:239.04px">1967年</div>
<div class="cell ca" style="top:249.2px">15</div>
<div class="cell cb" style="top:249px">無理心中 日本の夏</div>
<div class="cell cc" style="top:249.2px">1967年</div>
<div class="cell ca" style="top:259.36px">16</div>
<div class="cell cb" style="top:259.16px">絞死刑</div>
<div class="cell cc" style="top:259.36px">1968年</div>
<div class="cell ca" style="top:269.52px">17</div>
<div class="cell cb" style="top:269.32px">帰って来たヨッパライ</div>
<div class="cell cc" style="top:269.52px">1968年</div>
<div class="cell ca" style="top:279.68px">18</div>
<div class="cell cb" style="top:279.48px">新宿泥棒日記</div>
<div class="cell cc" style="top:279.68px">1969年</div>
<div class="cell ca" style="top:289.84px">19</div>
<div class="cell cb" style="top:289.64px">少年</div>
<div class="cell cc" style="top:289.84px">1969年</div>
<div class="cell ca" style="top:300px">20</div>
<div class="cell cb" style="top:299.8px">東京战争戦後秘話</div>
<div class="cell cc" style="top:300px">1970年</div>
<div class="cell ca" style="top:310.16px">21</div>
<div class="cell cb" style="top:309.96px">儀式</div>
<div class="cell cc" style="top:310.16px">1971年</div>
<div class="cell ca" style="top:320.32px">22</div>
<div class="cell cb" style="top:320.12px">夏の妹</div>
<div class="cell cc" style="top:320.32px">1972年</div>
<div class="cell ca" style="top:330.48px">23</div>
<div class="cell cb" style="top:330.28px">愛のコリーダ</div>
<div class="cell cc" style="top:330.48px">1976年</div>
<div class="cell ca" style="top:340.64px">24</div>
<div class="cell cb" style="top:340.44px">愛の亡霊</div>
<div class="cell cc" style="top:340.64px">1978年</div>
<div class="cell ca" style="top:350.8px">25</div>
<div class="cell cb" style="top:350.6px">戦場のメリークリスマス</div>
<div class="cell cc" style="top:350.8px">1983年</div>
<div class="cell ca" style="top:360.96px">26</div>
<div class="cell cb" style="top:360.76px">マックス、モン・アムール</div>
<div class="cell cc" style="top:360.96px">1987年</div>
<div class="cell ca" style="top:371.12px">27</div>
<div class="cell cb" style="top:370.92px">御法度</div>
<div class="cell cc" style="top:371.12px">1999年</div>
  <div class="abs" style="left:0;top:410.6px;width:712px;height:1px;background:#141414"></div>
  <div id="hscroll" class="abs" style="left:0;top:411.5px;width:712px;height:7px;background:#2a2a2a"></div>
  <div class="abs" style="left:1px;top:413.2px;width:492px;height:3.8px;border-radius:1.9px;background:#646464"></div>
  <div id="vscroll" class="abs" style="left:711.5px;top:85px;width:8.5px;height:346px;background:#2c2c2c;border-left:1.5px solid #1a1a1a;box-sizing:border-box"></div>
  <div class="abs" style="left:713.8px;top:86.5px;width:5px;height:202.5px;border-radius:2.5px;background:#6b6b6b"></div>
  <div class="abs" style="left:713.5px;top:84.5px;width:5.5px;height:2px;background:#c8c8c8"></div>
  <div id="sheets" class="abs" style="left:0;top:418.5px;width:720px;height:13px;background:#303030;border-top:1px solid #3a3a3a;box-sizing:border-box"></div>
  <div class="abs" style="left:0;top:418.5px;width:31.5px;height:13px;background:#2f2f2f;border-right:1px solid #222;box-sizing:border-box"></div>
  <div class="abs" style="left:31.5px;top:418.5px;width:80px;height:13px;background:#1f1f1f"></div>
  <div class="abs" style="left:71.2px;top:420px;width:0.8px;height:10px;background:#3a3a3a"></div>
  <div class="abs" style="left:171px;top:419px;width:0.8px;height:12px;background:#3a3a3a"></div>
  <div class="abs" style="left:111.9px;top:419px;width:40px;height:10.9px;background:#ffffff"></div>
  <svg class="abs" style="left:0;top:418px" width="180" height="14" viewBox="0 0 180 14"><path d="M11.2 4.6 L8.6 7 L11.2 9.4 Z" fill="#5a5a5a"/><path d="M20.8 4.6 L23.4 7 L20.8 9.4 Z" fill="#5a5a5a"/><path d="M158.3 7.2 L164.3 7.2 M161.3 4.2 L161.3 10.2" stroke="#e6e6e6" stroke-width="1"/></svg>
  <div class="t" style="left:40.6px;top:424.1px;font-size:6.5px;color:#7e7e7e;-webkit-text-stroke:0.1px #7e7e7e">Sheet1</div>
  <div class="t" style="left:80.6px;top:424.1px;font-size:6.5px;color:#7e7e7e;-webkit-text-stroke:0.1px #7e7e7e">Sheet2</div>
  <div class="t" style="left:120.6px;top:424.1px;font-size:6.5px;color:#3f8a62;-webkit-text-stroke:0.1px #3f8a62">Sheet3</div>
  <div id="status" class="abs" style="left:0;top:431.3px;width:720px;height:12.7px;background:#3b3b3b;border-top:1px solid #262626;box-sizing:border-box"></div>
  <div class="t" style="left:13px;top:437.1px;font-size:5.5px;color:#d0d0d0;font-weight:bold">参照</div>
  <svg class="abs" style="left:33px;top:432px" width="12" height="12" viewBox="0 0 12 12"><g fill="none" stroke="#d8d8d8" stroke-width="0.8"><path d="M5.5 1.8 L6.6 4 L9 4.3 L7.2 6 L7.7 8.4 L5.5 7.2 L3.3 8.4 L3.8 6 L2 4.3 L4.4 4 Z"/><path d="M2.5 10 L8.5 10"/></g></svg>
  <div class="t" style="left:43.5px;top:437.1px;font-size:5.5px;color:#d0d0d0">アクセシビリティ: 検討が必要です</div>
  <svg class="abs" style="left:550px;top:425px" width="170" height="19" viewBox="0 0 170 19">
    <g fill="none" stroke="#cfcfcf" stroke-width="0.7">
      <rect x="13.5" y="9.8" width="6.5" height="6.5"/>
      <path d="M13.5 12 L20 12 M13.5 14.2 L20 14.2 M15.7 9.8 L15.7 16.3 M17.9 9.8 L17.9 16.3"/>
      <rect x="31.5" y="9.8" width="7" height="6.5"/>
      <path d="M33.5 9.8 L33.5 16.3 M36.5 9.8 L36.5 16.3"/>
      <path d="M49.5 9.5 L49.5 16.3 L56.5 16.3 L56.5 9.5 M49.5 14 L53 14 L53 9.5"/>
    </g>
    <path d="M66.3 12.5 L70.6 12.5" stroke="#e0e0e0" stroke-width="1"/>
    <line x1="74" y1="12.5" x2="124" y2="12.5" stroke="#767676" stroke-width="1.4"/>
    <circle cx="99.4" cy="12.4" r="3.9" fill="#8e8e8e"/>
    <path d="M127.8 12.5 L132.2 12.5 M130 10.3 L130 14.7" stroke="#e6e6e6" stroke-width="1"/>
  </svg>
  <div class="t" style="left:690.6px;top:436.6px;font-size:6.4px;color:#dcdcdc;-webkit-text-stroke:0.15px #dcdcdc">100%</div>
  <div id="dialog" class="abs" style="left:210px;top:112px;width:150px;height:91px;border-radius:6px;background:#262626;box-shadow:0 10px 28px rgba(0,0,0,0.6),0 3px 8px rgba(0,0,0,0.3),0 0 0 0.6px #3c3c3c;overflow:hidden">
    <div class="abs" style="left:0;top:0;width:150px;height:13.3px;background:#2b2b2b;border-bottom:1px solid #1b1b1b"></div>
    <div class="t" style="left:0;width:150px;text-align:center;top:5.4px;font-size:6.2px;color:#d4d4d4;font-weight:bold;-webkit-text-stroke:0.15px #d4d4d4">テーブルの作成</div>
    <div class="t" style="left:10.6px;top:27.2px;font-size:5.85px;color:#e0e0e0;font-weight:bold;-webkit-text-stroke:0.12px #e0e0e0">表に変換するデータ範囲を指定してください。</div>
    <div class="abs" style="left:9.4px;top:35.5px;width:130.6px;height:12.5px;box-sizing:border-box;border:2px solid #348555;background:#2c2729"></div>
    <div class="t" style="left:12.6px;top:39.5px;font-size:6.8px;color:#f4f4f4;font-weight:bold;-webkit-text-stroke:0.4px #f4f4f4">=$A$1:$C$28</div>
    <div class="abs" style="left:130px;top:38.5px;width:7px;height:6.5px;background:#e8e8e8"></div>
    <svg class="abs" style="left:130px;top:38.5px" width="7" height="6.5" viewBox="0 0 7 6.5"><path d="M1.2 1.2 L4.6 4.6 M4.6 2.4 L4.6 4.6 L2.4 4.6" fill="none" stroke="#3a3a4a" stroke-width="0.9"/><rect x="0.6" y="0.6" width="2" height="1.4" fill="#8a3050"/></svg>
    <div class="abs" style="left:10.5px;top:51.7px;width:7.5px;height:7.5px;border-radius:2px;background:#2f8553"></div>
    <svg class="abs" style="left:10.5px;top:51.7px" width="8" height="8" viewBox="0 0 8 8"><path d="M1.8 4.1 L3.3 5.7 L6.3 2.2" fill="none" stroke="#ffffff" stroke-width="1.2" stroke-linecap="round" stroke-linejoin="round"/></svg>
    <div class="t" style="left:21px;top:52.5px;font-size:6px;color:#e0e0e0;font-weight:bold;-webkit-text-stroke:0.12px #e0e0e0">先頭行をテーブルの見出しとして使用する</div>
    <div class="abs" style="left:50px;top:70.5px;width:41px;height:9.5px;border-radius:2px;background:#5b5b5b"></div>
    <div class="t" style="left:50px;width:41px;text-align:center;top:73.9px;font-size:6px;color:#dedede;font-weight:bold;-webkit-text-stroke:0.12px #dedede">キャンセル</div>
    <div class="abs" style="left:97.3px;top:70.5px;width:41.5px;height:9.5px;border-radius:2px;background:#208a4c"></div>
    <div class="t" style="left:97.3px;width:41.5px;text-align:center;top:73.1px;font-size:7px;color:#d4f0dc;font-weight:bold">OK</div>
  </div>
</div>
</body></html>
